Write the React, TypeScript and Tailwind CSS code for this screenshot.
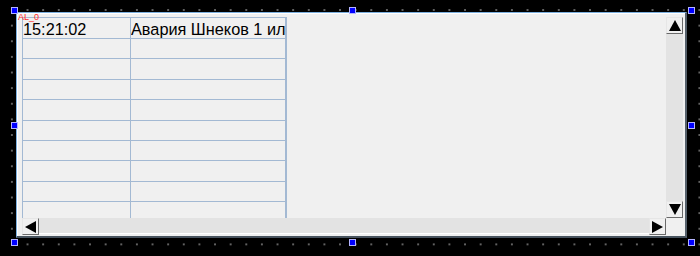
import React from "react";

const LINE = "border-[#a3b9d3]";

function Handle({ x, y }: { x: number; y: number }) {
  // x, y = top-left of the grip square, on the editor canvas
  return (
    <div
      className="absolute w-[7px] h-[7px] bg-[#0000ff] border border-[#b4b4ff]"
      style={{ left: x, top: y }}
    />
  );
}

function Arrow({ dir }: { dir: "up" | "down" | "left" | "right" }) {
  const pts = {
    up: "6,0 12,11 0,11",
    down: "0,0 12,0 6,11",
    left: "0,6 11,0 11,12",
    right: "0,0 11,6 0,12",
  }[dir];
  const vertical = dir === "up" || dir === "down";
  return (
    <svg
      width={vertical ? 12 : 11}
      height={vertical ? 11 : 12}
      viewBox={vertical ? "0 0 12 11" : "0 0 11 12"}
    >
      <polygon points={pts} fill="#000" />
    </svg>
  );
}

function ScrollButton({ dir }: { dir: "up" | "down" | "left" | "right" }) {
  return (
    <div className="w-[17px] h-[17px] shrink-0 flex items-center justify-center bg-[#f0f0f0] border-t border-l border-[#e6e6e6] border-r border-b border-r-[#6a6a6a] border-b-[#6a6a6a]">
      <Arrow dir={dir} />
    </div>
  );
}

const rows = [
  { time: "15:21:02", text: "Авария Шнеков 1 ил" },
  { time: "", text: "" },
  { time: "", text: "" },
  { time: "", text: "" },
  { time: "", text: "" },
  { time: "", text: "" },
  { time: "", text: "" },
  { time: "", text: "" },
  { time: "", text: "" },
  { time: "", text: "" },
];

export default function App() {
  return (
    <div className="relative w-[700px] h-[256px] overflow-hidden bg-black bg-[radial-gradient(circle,#777777_0.6px,transparent_1.1px)] bg-[length:15.63px_15.63px] bg-[position:4.1px_2.2px] font-['Liberation_Sans',Arial,sans-serif]">
      {/* alarm table widget */}
      <div className="absolute left-[16px] top-[12px] w-[671px] h-[226px] bg-[#f0f0f0] border-t border-l border-[#7db0df] border-r-2 border-b-2 border-r-[#55606b] border-b-[#47535e]">
        <div className="w-full h-full border-t border-l border-white pl-[4px] pt-[3px] pr-[2px] pb-[2px]">
          <div className="grid grid-cols-[644px_17px] grid-rows-[201px_16px] w-[661px] h-[217px]">
            {/* table */}
            <div className="overflow-hidden bg-[#f0f0f0]">
              <div className={`w-[265px] border-t border-l border-r-2 ${LINE} text-[16.3px] text-black`}>
                {rows.map((r, i) => (
                  <div
                    key={i}
                    className={`flex border-b ${LINE} ${i === 0 ? "h-[21px]" : "h-[20.375px]"}`}
                  >
                    <div className={`w-[108px] border-r ${LINE} pt-[2px] leading-[18px] whitespace-nowrap overflow-hidden`}>
                      {r.time}
                    </div>
                    <div className="flex-1 pt-[2px] leading-[18px] whitespace-nowrap overflow-hidden">
                      {r.text}
                    </div>
                  </div>
                ))}
              </div>
            </div>

            {/* vertical scrollbar */}
            <div className="flex flex-col justify-between bg-[#e3e3e3]">
              <ScrollButton dir="up" />
              <ScrollButton dir="down" />
            </div>

            {/* horizontal scrollbar */}
            <div className="flex justify-between bg-[#e3e3e3] border-b border-white">
              <ScrollButton dir="left" />
              <ScrollButton dir="right" />
            </div>
            <div className="bg-[#f0f0f0]" />
          </div>
        </div>
      </div>

      {/* object name label */}
      <div className="absolute left-[18px] top-[13px] text-[9px] leading-[9px] text-[#ff2a2a]">AL_0</div>

      {/* selection grips */}
      <Handle x={11} y={7} />
      <Handle x={349} y={7} />
      <Handle x={688} y={7} />
      <Handle x={11} y={122} />
      <Handle x={688} y={122} />
      <Handle x={11} y={239} />
      <Handle x={349} y={239} />
      <Handle x={688} y={239} />
    </div>
  );
}
